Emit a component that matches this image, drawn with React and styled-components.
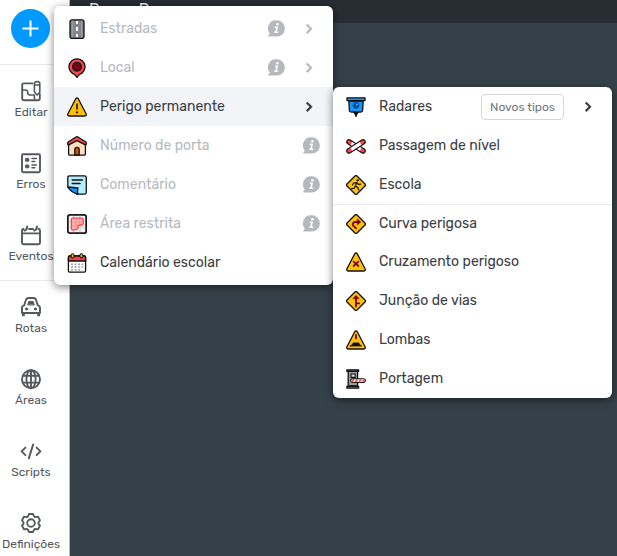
import React from 'react';
import styled, { createGlobalStyle } from 'styled-components';

const GlobalStyle = createGlobalStyle`
  * {
    box-sizing: border-box;
  }
  body {
    margin: 0;
    font-family: Rubik, Inter, 'Noto Sans', sans-serif;
    font-size: 14px;
    color: #3c4043;
  }
  button {
    font: inherit;
    color: inherit;
    border: 0;
    padding: 0;
    background: none;
    cursor: pointer;
  }
  svg {
    display: block;
    flex-shrink: 0;
  }
`;

const Page = styled.div`
  position: relative;
  display: flex;
  height: 100vh;
  overflow: hidden;
`;

const Sidebar = styled.nav`
  flex: 0 0 70px;
  background: #fff;
  border-right: 1px solid #b4b8bc;
`;

const AddBox = styled.div`
  display: flex;
  justify-content: center;
  padding: 9px 8px 16px 0;
`;

const AddButton = styled.button`
  display: flex;
  align-items: center;
  justify-content: center;
  width: 39px;
  height: 39px;
  border-radius: 50%;
  background: #0099ff;
  color: #fff;
`;

const NavSection = styled.div`
  box-shadow: inset 0 1px #e8eaed;
`;

const NavButton = styled.button`
  display: flex;
  flex-direction: column;
  align-items: center;
  gap: 2px;
  width: 62px;
  height: 72px;
  padding-top: 16px;
  font-size: 12px;
  line-height: 16px;
  color: #55595e;
  white-space: nowrap;
`;

const Main = styled.main`
  flex: 1;
  min-width: 0;
  background: #354148;
`;

const TopBar = styled.header`
  height: 23px;
  padding-left: 19px;
  overflow: hidden;
  background: #262d33;
  color: #e8eaed;
  font-size: 16px;
  line-height: 20px;
  white-space: nowrap;
`;

const Menu = styled.ul`
  position: absolute;
  top: 6px;
  left: 54px;
  width: 279px;
  margin: 0;
  padding: 3px 0;
  list-style: none;
  background: #fff;
  border-radius: 6px;
  box-shadow: 0 2px 8px rgba(0, 0, 0, 0.5);
`;

const SubMenu = styled(Menu)`
  top: 0;
  left: 100%;
  padding: 0;
`;

const MenuItem = styled.li`
  position: relative;
  border-top: ${props => (props.$divided ? '1px solid #e8eaed' : '0')};
`;

const MenuButton = styled.button`
  display: flex;
  align-items: center;
  gap: 13px;
  width: 100%;
  height: ${props => (props.$divided ? '37px' : '39px')};
  padding: 0 13px;
  text-align: left;
  white-space: nowrap;
  background: ${props => (props.$active ? '#f2f4f7' : 'none')};
  color: ${props => (props.disabled ? '#b7babf' : '#3c4043')};
`;

const ItemLabel = styled.span`
  flex: 1;
  line-height: 20px;
`;

const Tag = styled.span`
  padding: 3px 8px;
  border: 1px solid #d5d7db;
  border-radius: 4px;
  font-size: 12px;
  line-height: 18px;
  color: #72767d;
`;

const Art = ({ children }) => (
  <svg
    width="20"
    height="20"
    viewBox="0 0 20 20"
    fill="none"
    stroke="#111"
    strokeWidth="1.3"
    strokeLinejoin="round"
    strokeLinecap="round"
    aria-hidden="true"
  >
    {children}
  </svg>
);

const Chevron = () => (
  <svg width="22" height="22" viewBox="0 0 22 22" fill="none" stroke="currentColor" strokeWidth="2.2" aria-hidden="true">
    <path d="M8.7 6.5 L13 10.8 L8.7 15.1" />
  </svg>
);

const Info = () => (
  <svg width="17" height="17" viewBox="0 0 17 17" aria-hidden="true">
    <path
      d="M8.8 0.3 a8.1 8.1 0 1 1 0 16.2 H1 c-0.9 0 -1.1 -0.8 -0.5 -1.2 l1.4 -1.6 A8.1 8.1 0 0 1 8.8 0.3 Z"
      fill="#b5b8bd"
    />
    <circle cx="9.4" cy="4.3" r="1.3" fill="#fff" />
    <path d="M6.9 7.3 H9 L8 12.3 H10.2 M6.3 12.3 H8" fill="none" stroke="#fff" strokeWidth="1.6" />
  </svg>
);

const Diamond = ({ children }) => (
  <Art>
    <path d="M9 1 Q10 0.1 11 1 L19 9 Q19.9 10 19 11 L11 19 Q10 19.9 9 19 L1 11 Q0.1 10 1 9 Z" fill="#ffc107" />
    {children}
  </Art>
);

const Triangle = ({ children }) => (
  <Art>
    <path
      d="M8.9 1.5 Q10 0.2 11.1 1.5 L19.2 17 Q19.6 18.9 18 19 H2 Q0.4 18.9 0.8 17 Z"
      fill="#ffc107"
    />
    {children}
  </Art>
);

const RoadIcon = () => (
  <Art>
    <rect x="3" y="0.8" width="14" height="18.6" rx="2" fill="#82868d" />
    <path d="M10 2 V5 M10 8 V12 M10 15 V18" stroke="#fff" strokeWidth="2" strokeLinecap="butt" />
    <path d="M5.3 2 V18 M14.7 2 V18" stroke="#a5a9af" strokeWidth="0.8" />
  </Art>
);

const PlaceIcon = () => (
  <Art>
    <path d="M10 0.8 A8 8 0 0 1 12.5 16.4 L10 19.4 L7.5 16.4 A8 8 0 0 1 10 0.8 Z" fill="#f5484d" />
    <circle cx="10" cy="8.7" r="4.4" fill="#79001f" />
  </Art>
);

const HazardIcon = () => (
  <Triangle>
    <path d="M10 7 V12" strokeWidth="1.6" />
    <circle cx="10" cy="15.3" r="0.5" />
  </Triangle>
);

const HouseIcon = () => (
  <Art>
    <path d="M1.6 8 L10 3 L18.4 8 V18 Q18.4 19.2 17.2 19.2 H2.8 Q1.6 19.2 1.6 18 Z" fill="#ffdfc0" />
    <path d="M9 1 Q10 0.4 11 1 L18.8 6 Q19.8 7.4 18.8 9.2 L10 4.6 L1.2 9.2 Q0.2 7.4 1.2 6 Z" fill="#f0444b" />
    <path d="M7.8 19 V13.5 Q7.8 11.4 10 11.4 Q12.2 11.4 12.2 13.5 V19 Z" fill="#c85a0a" />
  </Art>
);

const NoteIcon = () => (
  <Art>
    <path d="M2.5 0.8 H17.5 Q19.3 0.8 19.3 2.5 V17.5 Q19.3 19.2 17.5 19.2 H10 L0.8 12 V2.5 Q0.8 0.8 2.5 0.8 Z" fill="#b7ebff" />
    <path d="M0.8 12 L11 13 Q10.2 15 10.8 19.2 Q4 17.5 0.8 12 Z" fill="#1798f5" />
    <path d="M5.2 5 H15.4 M5.2 8.6 H13" strokeWidth="1.5" />
  </Art>
);

const AreaIcon = () => (
  <Art>
    <rect x="0.8" y="0.8" width="18.4" height="18.4" rx="2" fill="#f0f1f3" />
    <path d="M1.5 7.5 H18.5 M1.5 13 H18.5 M6.5 1.5 V18.5 M13 1.5 V18.5" stroke="#c3c7cd" strokeWidth="1.1" />
    <path
      d="M5.8 4.2 H14.7 Q16.2 4.2 16.2 5.6 V9.6 Q16.2 11 14.8 11 H12.2 Q11 11 11 12.2 V13.8 Q11 15 9.6 15.4 L5.8 16.2 Q4.4 16 4.4 14.6 V5.6 Q4.4 4.2 5.8 4.2 Z"
      fill="#ffb0b2"
      stroke="#f5484d"
    />
    <path d="M5 8 H15.6 M5 12 H11 M8.8 5 V15 M12.6 5 V10.5" stroke="#ff8588" strokeWidth="0.6" />
    <rect x="0.8" y="0.8" width="18.4" height="18.4" rx="2" />
  </Art>
);

const CalendarIcon = () => (
  <Art>
    <rect x="1.4" y="3" width="17.2" height="16.2" rx="1.4" fill="#fff" />
    <path d="M1.4 8 V4.4 Q1.4 3 2.8 3 H17.2 Q18.6 3 18.6 4.4 V8 Z" fill="#f0444b" />
    <path
      d="M4 11.2 H6 M7.6 11.2 H9.6 M11.2 11.2 H13.2 M14.6 11.2 H16.2 M4 14 H6 M7.6 14 H9.6 M11.2 14 H13.2 M14.6 14 H16.2 M4 16.7 H6 M7.6 16.7 H9.6 M11.2 16.7 H13.2"
      stroke="#9da2a9"
      strokeLinecap="butt"
      strokeWidth="1.5"
    />
    <path d="M5.6 2.2 V3.6 M14.4 2.2 V3.6" strokeWidth="3.8" />
    <path d="M5.6 2.2 V3.4 M14.4 2.2 V3.4" stroke="#ffc107" strokeWidth="1.8" />
  </Art>
);

const CameraIcon = () => (
  <Art>
    <path d="M10 16 V19.2" strokeWidth="1.6" />
    <path d="M8 15.6 H12 L10 18 Z" fill="#111" />
    <path d="M2.8 4 H17.2 L16.6 13.5 Q16.4 15 14.8 15 H5.2 Q3.6 15 3.4 13.5 Z" fill="#1598f7" />
    <path d="M1 0.9 H19 V3.6 H1 Z" fill="#1598f7" />
    <circle cx="10" cy="8.4" r="3" fill="#0b4fa0" stroke="#0b4fa0" strokeWidth="0.8" />
    <circle cx="11" cy="7.5" r="0.9" fill="#55b9ff" stroke="none" />
  </Art>
);

const CrossingIcon = () => (
  <Art>
    <path d="M3 5.9 L17 14.9" strokeWidth="5.6" />
    <path d="M3 5.9 L17 14.9" stroke="#f5484d" strokeWidth="3.2" />
    <path d="M5.3 7.4 L14.7 13.4" stroke="#fff" strokeWidth="3.2" strokeLinecap="butt" />
    <path d="M17 5.9 L3 14.9" strokeWidth="5.6" />
    <path d="M17 5.9 L3 14.9" stroke="#f5484d" strokeWidth="3.2" />
    <path d="M14.7 7.4 L5.3 13.4" stroke="#fff" strokeWidth="3.2" strokeLinecap="butt" />
  </Art>
);

const SchoolIcon = () => (
  <Diamond>
    <circle cx="11.6" cy="5.3" r="0.9" fill="#111" strokeWidth="0.6" />
    <path
      d="M10.8 7.6 L9.4 11 L11.8 12.5 L12.8 15 M9.4 11 L8 13.4 L5.6 13.6 M10.8 7.6 L7.6 8 L6.4 10 M10.8 7.6 L12.4 9.4 L14.6 9.2"
      strokeWidth="1.2"
    />
  </Diamond>
);

const CurveIcon = () => (
  <Diamond>
    <path d="M10 14.4 L7.2 11.6 Q6 10.2 7.2 8.9 Q8 8 9.4 8 H12" stroke="#79001f" strokeWidth="1.8" />
    <path d="M11.6 5.3 L14.6 8 L11.6 10.7 Z" fill="#79001f" stroke="#79001f" strokeWidth="0.8" />
  </Diamond>
);

const CrossroadIcon = () => (
  <Triangle>
    <path d="M7.6 9.6 L12.4 14 M12.4 9.6 L7.6 14" stroke="#79001f" strokeWidth="1.7" />
  </Triangle>
);

const MergeIcon = () => (
  <Diamond>
    <path d="M10 6 V15.6 M10 12.4 H13.2" stroke="#79001f" strokeWidth="1.8" />
    <path d="M7.2 7.4 L10 4.4 L12.8 7.4 Z" fill="#79001f" stroke="#79001f" strokeWidth="0.7" />
  </Diamond>
);

const BumpIcon = () => (
  <Triangle>
    <path d="M10 5 V8.4" stroke="#79001f" strokeWidth="1.8" />
    <path
      d="M4.3 16 H15.7 Q13.8 15.4 13.2 13.6 Q12.6 12.4 11.4 12.8 Q10 13.4 8.6 12.8 Q7.4 12.4 6.8 13.6 Q6.2 15.4 4.3 16 Z"
      fill="#111"
      strokeWidth="0.8"
    />
  </Triangle>
);

const TollIcon = () => (
  <Art>
    <path d="M2.2 2.4 H11.6 V17 H2.2 Z" fill="#999da4" />
    <path d="M0.9 0.8 H12.6 V2.4 H0.9 Z M0.9 17.4 H12.6 V19.2 H0.9 Z" fill="#82868d" />
    <path d="M5 5 H9.2 V8.4 H5 Z" fill="#d9dce0" strokeWidth="1.1" />
    <path d="M6.6 11.6 H17.5" strokeWidth="4.8" />
    <path d="M6.6 11.6 H17.5" stroke="#fff" strokeWidth="2.6" />
    <path d="M6.2 12.4 L7.6 10.8 M9.8 12.4 L11.2 10.8 M13.4 12.4 L14.8 10.8 M17 12.4 L18 11.2" stroke="#f5484d" strokeWidth="1.7" />
  </Art>
);

// Line icons of the side bar
const Line = ({ children }) => (
  <svg
    width="22"
    height="22"
    viewBox="0 0 22 22"
    fill="none"
    stroke="currentColor"
    strokeWidth="1.9"
    strokeLinejoin="round"
    strokeLinecap="round"
    aria-hidden="true"
  >
    {children}
  </svg>
);

const PlusIcon = () => (
  <svg width="17" height="17" viewBox="0 0 17 17" stroke="currentColor" strokeWidth="2" aria-hidden="true">
    <path d="M8.5 0.5 V16.5 M0.5 8.5 H16.5" />
  </svg>
);

const EditIcon = () => (
  <Line>
    <path d="M12.4 3.4 H3.6 Q2.2 3.4 2.2 4.8 V18.8 Q2.2 20.2 3.6 20.2 H18.4 Q19.8 20.2 19.8 18.8 V14" />
    <path d="M14.4 3.4 Q14.4 1.6 17.1 1.6 Q19.8 1.6 19.8 3.4 V12 L17.1 15 L14.4 12 Z M14.4 5 H19.8" strokeWidth="1.6" />
    <path d="M2.4 10 H5.6 Q7.6 10 7.6 12 Q7.6 15 10 15 H14.4 V20" strokeWidth="1.6" />
  </Line>
);

const ErrorsIcon = () => (
  <Line>
    <rect x="2" y="2.2" width="18" height="18" rx="1.2" />
    <path d="M6 6.4 H8.8 V9.2 H6 Z M6 13 H8.8 V15.8 H6 Z" fill="currentColor" strokeWidth="1" />
    <path d="M12 6.6 H16.4 M12 9.4 H14.8 M12 13 H16.4 M12 15.8 H14.8" strokeWidth="1.5" />
  </Line>
);

const EventsIcon = () => (
  <Line>
    <path d="M2 9.4 H20 M3.6 5 Q2 5 2 6.4 V18.8 Q2 20.2 3.4 20.2 H18.6 Q20 20.2 20 18.8 V6.4 Q20 5 18.6 5 M9 5 H13" />
    <path d="M4.4 6.6 Q7 6 7.2 2.4 M14 6.6 Q16.8 6 17 2.4" />
  </Line>
);

const CarIcon = () => (
  <Line>
    <path d="M2 17 V12 Q2 9.8 4.2 9.4 L5.8 4.2 Q6.4 2 8.6 2 H13.4 Q15.6 2 16.2 4.2 L17.8 9.4 Q20 9.8 20 12 V17 Z" />
    <path d="M7.8 8.6 L8.8 5.4 H13.2 L14.2 8.6 Z" fill="currentColor" strokeWidth="1" />
    <path d="M3.4 17.4 V20.2 M18.6 17.4 V20.2" strokeWidth="2.8" strokeLinecap="butt" />
    <circle cx="6.6" cy="13" r="1.1" fill="currentColor" strokeWidth="1" />
    <circle cx="15.4" cy="13" r="1.1" fill="currentColor" strokeWidth="1" />
  </Line>
);

const GlobeIcon = () => (
  <Line>
    <circle cx="11" cy="11.2" r="9" />
    <ellipse cx="11" cy="11.2" rx="4.6" ry="9" />
    <path d="M2.8 7.8 H19.2 M2.8 14.6 H19.2 M11 2.2 V20.2" />
  </Line>
);

const ScriptsIcon = () => (
  <Line>
    <path d="M5.4 7.6 L1.6 11.4 L5.4 15.2 M16.6 7.6 L20.4 11.4 L16.6 15.2 M13.2 4.4 L8.8 18.4" />
  </Line>
);

const SettingsIcon = () => (
  <Line>
    <path d="M9 2 H13 Q13.8 4.6 15 5 Q16 5.2 18 4.6 L20 8.4 Q18.4 9.8 18.4 11 Q18.4 12.2 20 13.6 L18 17.4 Q16 16.8 15 17 Q13.8 17.4 13 20 H9 Q8.2 17.4 7 17 Q6 16.8 4 17.4 L2 13.6 Q3.6 12.2 3.6 11 Q3.6 9.8 2 8.4 L4 4.6 Q6 5.2 7 5 Q8.2 4.6 9 2 Z" />
    <circle cx="11" cy="11" r="3.8" />
  </Line>
);

const navSections = [
  [
    { label: 'Editar', Icon: EditIcon },
    { label: 'Erros', Icon: ErrorsIcon },
    { label: 'Eventos', Icon: EventsIcon },
  ],
  [
    { label: 'Rotas', Icon: CarIcon },
    { label: 'Áreas', Icon: GlobeIcon },
    { label: 'Scripts', Icon: ScriptsIcon },
    { label: 'Definições', Icon: SettingsIcon },
  ],
];

const hazardItems = [
  { label: 'Radares', Icon: CameraIcon, tag: 'Novos tipos', arrow: true },
  { label: 'Passagem de nível', Icon: CrossingIcon },
  { label: 'Escola', Icon: SchoolIcon },
  { label: 'Curva perigosa', Icon: CurveIcon, divided: true },
  { label: 'Cruzamento perigoso', Icon: CrossroadIcon },
  { label: 'Junção de vias', Icon: MergeIcon },
  { label: 'Lombas', Icon: BumpIcon },
  { label: 'Portagem', Icon: TollIcon },
];

const addItems = [
  { label: 'Estradas', Icon: RoadIcon, disabled: true, info: true, arrow: true },
  { label: 'Local', Icon: PlaceIcon, disabled: true, info: true, arrow: true },
  { label: 'Perigo permanente', Icon: HazardIcon, active: true, arrow: true, children: hazardItems },
  { label: 'Número de porta', Icon: HouseIcon, disabled: true, info: true },
  { label: 'Comentário', Icon: NoteIcon, disabled: true, info: true },
  { label: 'Área restrita', Icon: AreaIcon, disabled: true, info: true },
  { label: 'Calendário escolar', Icon: CalendarIcon },
];

function Item({ item }) {
  const { label, Icon, disabled, active, divided, tag, info, arrow, children } = item;

  return (
    <MenuItem $divided={divided}>
      <MenuButton type="button" disabled={disabled} $active={active} $divided={divided}>
        <Icon />
        <ItemLabel>{label}</ItemLabel>
        {tag && <Tag>{tag}</Tag>}
        {info && <Info />}
        {arrow && <Chevron />}
      </MenuButton>
      {children && (
        <SubMenu>
          {children.map(child => (
            <Item item={child} key={child.label} />
          ))}
        </SubMenu>
      )}
    </MenuItem>
  );
}

function App() {
  return (
    <Page>
      <GlobalStyle />
      <Sidebar>
        <AddBox>
          <AddButton type="button" aria-label="Adicionar">
            <PlusIcon />
          </AddButton>
        </AddBox>
        {navSections.map(section => (
          <NavSection key={section[0].label}>
            {section.map(({ label, Icon }) => (
              <NavButton type="button" key={label}>
                <Icon />
                {label}
              </NavButton>
            ))}
          </NavSection>
        ))}
      </Sidebar>
      <Main>
        <TopBar>Penas Povo</TopBar>
      </Main>
      <Menu>
        {addItems.map(item => (
          <Item item={item} key={item.label} />
        ))}
      </Menu>
    </Page>
  );
}

export default App;
